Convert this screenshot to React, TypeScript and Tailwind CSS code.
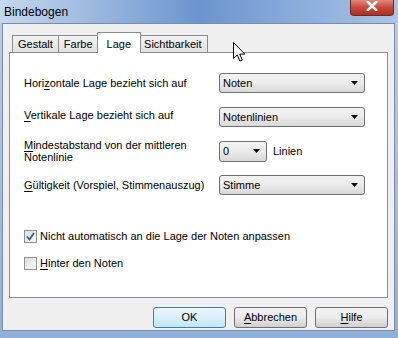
import React from "react";

const font = { fontFamily: '"Liberation Sans", Arial, sans-serif' };

function U({ children }: { children: React.ReactNode }) {
  return <span className="underline underline-offset-[2px]">{children}</span>;
}

function Arrow() {
  return (
    <svg width="7" height="4" viewBox="0 0 7 4">
      <path d="M0 0h7L3.5 4z" fill="#000" />
    </svg>
  );
}

function Combo({ value, w = "w-[146px]", h = "h-[20px]" }: { value: string; w?: string; h?: string }) {
  return (
    <div
      className={`${w} ${h} flex items-center justify-between rounded-[3px] border border-[#707070] bg-gradient-to-b from-[#f3f3f3] via-[#ebebeb] to-[#d8d8d8] pl-[3px] pr-[6px] text-[11px] text-black`}
    >
      <span>{value}</span>
      <Arrow />
    </div>
  );
}

function Check({ checked, children }: { checked?: boolean; children: React.ReactNode }) {
  return (
    <div className="flex h-[13px] items-center gap-[3px]">
      <div className="flex h-[13px] w-[13px] items-center justify-center border border-[#8e8f8f] bg-gradient-to-br from-[#dcdcdc] to-[#fbfbfb]">
        {checked && (
          <svg width="9" height="9" viewBox="0 0 9 9">
            <path d="M1 4.5l2.5 3L8 1" fill="none" stroke="#3a5a9e" strokeWidth="1.8" />
          </svg>
        )}
      </div>
      <span className="text-[11px] text-black">{children}</span>
    </div>
  );
}

function Btn({ children, def }: { children: React.ReactNode; def?: boolean }) {
  return (
    <div
      className={`flex h-[21px] w-[73px] items-center justify-center rounded-[3px] border text-[11px] text-black ${
        def
          ? "border-[#3c7fb1] bg-gradient-to-b from-[#eaf6fd] via-[#d9f0fc] to-[#bee6fd]"
          : "border-[#707070] bg-gradient-to-b from-[#f2f2f2] via-[#ebebeb] to-[#cfcfcf]"
      }`}
    >
      {children}
    </div>
  );
}

function Tab({ label, active }: { label: string; active?: boolean }) {
  if (active)
    return (
      <div className="relative z-10 -mx-[2px] -mb-[1px] flex h-[21px] items-start border border-b-0 border-[#898c95] bg-white px-[9px] pt-[3px] text-[11px] text-black">
        {label}
      </div>
    );
  return (
    <div className="-ml-[1px] flex h-[17px] items-center border border-b-0 border-[#898c95] bg-gradient-to-b from-[#f3f3f3] to-[#e3e3e3] px-[5px] text-[11px] text-black first:ml-0">
      {label}
    </div>
  );
}

export default function App() {
  return (
    <div
      className="relative flex h-[338px] w-[398px] flex-col overflow-hidden bg-gradient-to-b from-[#b9cfea] to-[#8eb0da]"
      style={font}
    >
      <div className="flex h-[23px] shrink-0 items-start justify-between bg-gradient-to-r from-[#c6d8ee] via-[#6b95cf] to-[#a9c4e5]">
        <span className="pl-[4px] pt-[3px] text-[12px] text-black">Bindebogen</span>
        <div className="mr-[4px] flex h-[16px] w-[44px] items-center justify-center rounded-b-[4px] border border-t-0 border-[#6b2a22] bg-gradient-to-b from-[#e08a7c] via-[#c8473a] to-[#b4301f]">
          <svg width="12" height="10" viewBox="0 0 12 10" className="-mt-[4px]">
            <path d="M1 0l10 10M11 0L1 10" stroke="#fff" strokeWidth="2.6" />
          </svg>
        </div>
      </div>

      <div className="mb-[7px] ml-[2px] mr-[3px] flex flex-1 flex-col border border-[#7d8ca3] bg-[#f0f0f0] px-[6px]">
        <div className="mt-[8px] flex items-end pl-[3px]">
          <Tab label="Gestalt" />
          <Tab label="Farbe" />
          <Tab label="Lage" active />
          <Tab label="Sichtbarkeit" />
        </div>

        <div className="flex h-[246px] flex-col border border-[#898c95] bg-white pl-[14px] text-[11px] text-black">
          <div className="mt-[20px] flex h-[20px] items-center">
            <span className="w-[195px]">
              Hori<U>z</U>ontale Lage bezieht sich auf
            </span>
            <Combo value="Noten" />
          </div>

          <div className="mt-[14px] flex h-[20px] items-center">
            <span className="w-[195px] -mt-[3px]">
              <U>V</U>ertikale Lage bezieht sich auf
            </span>
            <Combo value="Notenlinien" />
          </div>

          <div className="mt-[12px] flex h-[24px] items-center">
            <span className="w-[195px] leading-[12px]">
              <U>M</U>indestabstand von der mittleren
              <br />
              Notenlinie
            </span>
            <Combo value="0" w="w-[48px]" h="h-[21px]" />
            <span className="ml-[6px]">Linien</span>
          </div>

          <div className="mt-[12px] flex h-[20px] items-center">
            <span className="w-[195px]">
              <U>G</U>ültigkeit (Vorspiel, Stimmenauszug)
            </span>
            <Combo value="Stimme" />
          </div>

          <div className="mt-[35px]">
            <Check checked>Nicht automatisch an die Lage der Noten anpassen</Check>
          </div>
          <div className="mt-[14px]">
            <Check>
              <U>H</U>inter den Noten
            </Check>
          </div>
        </div>

        <div className="mt-[9px] flex justify-end gap-[8px] pr-[0px]">
          <Btn def>OK</Btn>
          <Btn>
            <U>A</U>bbrechen
          </Btn>
          <Btn>
            <U>H</U>ilfe
          </Btn>
        </div>
      </div>

      <svg
        className="absolute left-[233px] top-[42px]"
        width="13"
        height="20"
        viewBox="0 0 13 20"
      >
        <path
          d="M0.5 0.5v16l3.8-3.6 2.6 6.2 2.4-1-2.6-6h5.2z"
          fill="#fff"
          stroke="#000"
          strokeWidth="1"
          strokeLinejoin="round"
        />
      </svg>
    </div>
  );
}
